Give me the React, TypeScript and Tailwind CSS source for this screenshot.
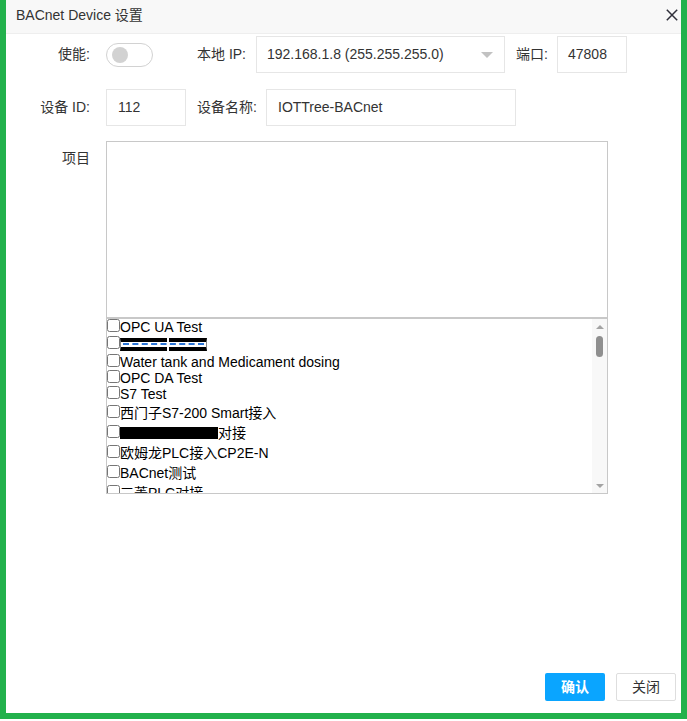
import React from "react";

const font = { fontFamily: '"Liberation Sans", Arial, "Noto Sans CJK SC", sans-serif' };

type Item = { label?: string; mask?: "dash" | "black"; suffix?: string };

const items: Item[] = [
    { label: "OPC UA Test" },
    { mask: "dash" },
    { label: "Water tank and Medicament dosing" },
    { label: "OPC DA Test" },
    { label: "S7 Test" },
    { label: "西门子S7-200 Smart接入" },
    { mask: "black", suffix: "对接" },
    { label: "欧姆龙PLC接入CP2E-N" },
    { label: "BACnet测试" },
    { label: "三菱PLC对接" },
];

function Redact({ kind }: { kind: "dash" | "black" }) {
    if (kind === "black") {
        return <span className="inline-block w-[98px] h-[12px] bg-black align-[-1px]" />;
    }
    return (
        <span className="relative inline-block w-[87px] h-[13px] align-[-2px] border-x border-[#888] border-y-[4px] border-y-black bg-white">
            <span className="absolute left-[2px] right-[2px] top-[1px] border-t-2 border-dashed border-[#2a74d6]" />
            <span className="absolute left-[46px] -top-[4px] -bottom-[4px] w-[2px] bg-white" />
        </span>
    );
}

export default function App() {
    return (
        <div className="w-[687px] h-[721px] bg-white text-[14px] text-[#333]" style={font}>
            <div className="h-[719px] border-x-[6px] border-b-[6px] border-[#22b14c] flex flex-col">
                {/* title */}
                <div className="h-[34px] shrink-0 bg-[#f8f8f8] border-b border-[#eee] flex items-center justify-between pl-[10px] pr-[3px]">
                    <span className="leading-5 -mt-[4px]">BACnet Device 设置</span>
                    <svg width="12" height="12" viewBox="0 0 12 12" className="-mt-[4px]">
                        <path d="M0.8 0.8 L11.2 11.2 M11.2 0.8 L0.8 11.2" stroke="#2f2f3a" strokeWidth="1.5" />
                    </svg>
                </div>

                {/* row 1 */}
                <div className="mt-[2px] flex items-center h-[37px]">
                    <div className="w-[84px] text-right">使能:</div>
                    <div className="ml-4 w-[79px]">
                        <div className="w-[47px] h-[24px] rounded-full border border-[#d2d2d2] flex items-center pl-[5px]">
                            <span className="size-[16px] rounded-full bg-[#d2d2d2]" />
                        </div>
                    </div>
                    <div className="ml-3 w-[59px]">本地 IP:</div>
                    <div className="w-[249px] h-[37px] border border-[#e6e6e6] flex items-center justify-between pl-[10px] pr-[11px]">
                        <span>192.168.1.8 (255.255.255.0)</span>
                        <span className="w-0 h-0 border-x-[6px] border-x-transparent border-t-[6px] border-t-[#c2c2c2]" />
                    </div>
                    <div className="ml-[11px] w-[41px]">端口:</div>
                    <div className="w-[70px] h-[37px] border border-[#e6e6e6] flex items-center pl-[10px]">47808</div>
                </div>

                {/* row 2 */}
                <div className="mt-[16px] flex items-center h-[37px]">
                    <div className="w-[84px] text-right">设备 ID:</div>
                    <div className="ml-4 w-[80px] h-[37px] border border-[#e6e6e6] flex items-center pl-[11px]">112</div>
                    <div className="ml-[11px] w-[69px]">设备名称:</div>
                    <div className="w-[250px] h-[37px] border border-[#e6e6e6] flex items-center pl-[11px]">IOTTree-BACnet</div>
                </div>

                {/* row 3 */}
                <div className="mt-[15px] flex">
                    <div className="w-[84px] text-right pt-[7px] leading-5">项目</div>
                    <div className="ml-4 flex flex-col">
                        <textarea readOnly className="w-[502px] h-[177px] border border-[#c8c8c8] resize-none outline-none block" />
                        <div className="w-[502px] h-[176px] border border-[#c8c8c8] flex overflow-hidden text-black">
                            <div className="flex-1 overflow-hidden leading-[normal]">
                                {items.map((it, i) => (
                                    <div key={i} className={`whitespace-nowrap ${it.mask === "dash" ? "h-[19px] pt-[1px]" : ""}`}>
                                        <input type="checkbox" className="m-0 align-baseline" />
                                        {it.mask ? <Redact kind={it.mask} /> : null}
                                        {it.label}
                                        {it.suffix}
                                    </div>
                                ))}
                            </div>
                            <div className="w-[15px] shrink-0 bg-[#f8f8f8] flex flex-col items-center">
                                <div className="h-[15px] flex items-center justify-center">
                                    <span className="w-0 h-0 border-x-[4px] border-x-transparent border-b-[4px] border-b-[#a3a3a3]" />
                                </div>
                                <div className="mt-[2px] w-[7px] h-[21px] rounded-full bg-[#8f8f8f]" />
                                <div className="mt-auto h-[15px] flex items-center justify-center">
                                    <span className="w-0 h-0 border-x-[4px] border-x-transparent border-t-[4px] border-t-[#a3a3a3]" />
                                </div>
                            </div>
                        </div>
                    </div>
                </div>

                {/* buttons */}
                <div className="mt-auto flex justify-end gap-[11px] pr-[5px] pb-[12px]">
                    <button className="w-[60px] h-[28px] rounded-[2px] bg-[#0aa5ff] text-white font-bold">确认</button>
                    <button className="w-[60px] h-[28px] rounded-[2px] border border-[#dedede] bg-white text-[#333]">关闭</button>
                </div>
            </div>
        </div>
    );
}
